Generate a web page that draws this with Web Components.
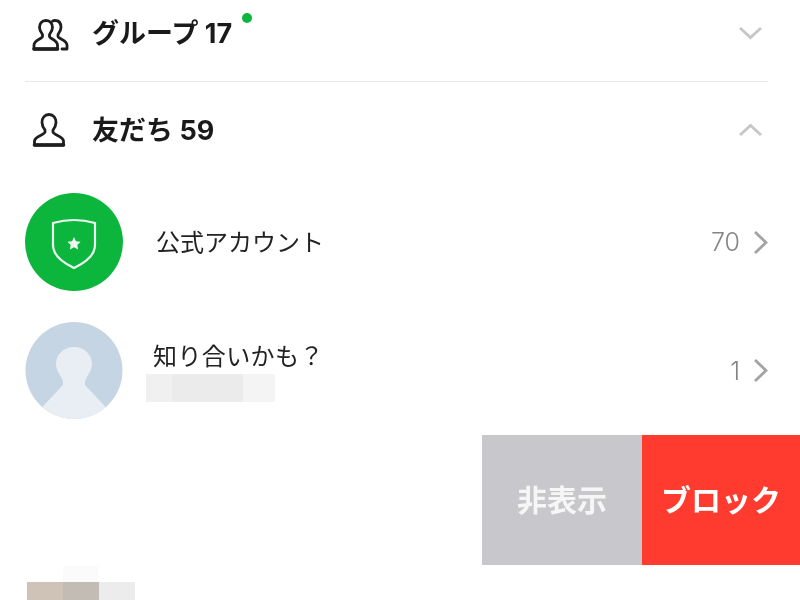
<!DOCTYPE html>
<html lang="ja">
<head>
<meta charset="utf-8">
<title>友だち</title>
<style>
html, body {
    margin: 0;
    padding: 0;
    height: 600px;
    overflow: hidden;
    background: #fff;
}
body {
    font-family: "Noto Sans CJK JP", "Liberation Sans", sans-serif;
    color: #1a1a1a;
    filter: blur(0.4px);
}
</style>
</head>
<body>
<friend-list>
    <section-header height="66" chevron="down" badge>
        <svg slot="icon" style="margin:3px 0 0 1.5px" width="38" height="32" viewBox="0 0 38 32" fill="none" stroke="#1e1e1e" stroke-width="2.8" stroke-linejoin="round" stroke-linecap="round">
            <path d="M14 1.5C9.5 1.5 7.5 5 7.5 8.5C7.5 11.5 9 13.5 10.5 15.5V17.5C10.5 19.5 2 21.5 2 26V30H25.5V26C25.5 21.5 17.5 19.5 17.5 17.5V15.5C19 13.5 20.5 11.5 20.5 8.5C20.5 5 18.5 1.5 14 1.5Z"/>
            <path d="M20.5 2.2C21.2 1.7 22 1.5 23 1.5C27.5 1.5 29 5 29 8.5C29 11.5 27.5 13.5 26 15.5V17.5C26 19.5 35 21.5 35 26V30H30"/>
            <path d="M2 30H25.5" stroke-width="3.6"/>
        </svg>
        グループ 17
    </section-header>
    <hr-line></hr-line>
    <section-header height="96" chevron="up">
        <svg slot="icon" width="38" height="34" viewBox="0 0 38 34" fill="none" stroke="#1e1e1e" stroke-width="2.8" stroke-linejoin="round" stroke-linecap="round">
            <path d="M19 1.5C14.5 1.5 12 5 12 9.5C12 12.5 13.5 15 15 17V19C15 21.5 4.5 23.5 4.5 28V32H33.5V28C33.5 23.5 23 21.5 23 19V17C24.5 15 26 12.5 26 9.5C26 5 23.5 1.5 19 1.5Z"/>
            <path d="M4.5 32H33.5" stroke-width="3.6"/>
        </svg>
        友だち 59
    </section-header>
    <list-row count="70" style="margin-top:15px">
        <svg slot="avatar" width="98" height="98" viewBox="0 0 98 98">
            <circle cx="49" cy="49" r="49" fill="#0cb53c"/>
            <path d="M28 30Q49 24 70 30V52Q70 65 49 75Q28 65 28 52Z" fill="none" stroke="#effaf2" stroke-width="2.2" stroke-linejoin="miter"/>
            <path d="M49 44L51 48.2L55.6 48.8L52.3 52L53.1 56.5L49 54.3L44.9 56.5L45.7 52L42.4 48.8L47 48.2Z" fill="#effaf2"/>
        </svg>
        <span slot="title" style="margin-left:33px;margin-top:-3px">公式アカウント</span>
    </list-row>
    <list-row count="1" style="margin-top:31px">
        <svg slot="avatar" width="98" height="97" viewBox="0 0 98 97">
            <defs><clipPath id="round"><circle cx="49" cy="48.5" r="48.5"/></clipPath></defs>
            <circle cx="49" cy="48.5" r="48.5" fill="#c5d5e3"/>
            <g clip-path="url(#round)" fill="#e8eef3">
                <path d="M49 25C38 25 31 33 31 42C31 50 37 54 38 60V63L6 97H92L60 63V60C61 54 67 50 67 42C67 33 60 25 49 25Z"/>
            </g>
        </svg>
        <span slot="title" style="margin-left:30px;margin-top:-1px;letter-spacing:.4px">知り合いかも？</span>
        <mosaic-bar slot="sub" cells="26:#f0f0f0,71:#ebebeb,32:#f4f4f4" style="margin:2px 0 0 23px;height:28px"></mosaic-bar>
    </list-row>
    <swipe-actions style="margin-top:16px">
        <action-button width="160" color="#c7c7cc" text="#f6f6f7">非表示</action-button>
        <action-button width="158" color="#ff3b30" text="#fff">ブロック</action-button>
    </swipe-actions>
    <mosaic-bar cells="36:#fff,35:#fbfbfb" style="margin:1px 0 0 27px;height:16px"></mosaic-bar>
    <mosaic-bar cells="36:#cfc3b8,36:#c2bcb5,36:#ececec" style="margin-left:27px;height:18px"></mosaic-bar>
</friend-list>

<script>
const chevrons = {
    down: '<path d="M2 2L12.5 11.5L23 2"/>',
    up: '<path d="M2 12L12.5 2.5L23 12"/>'
};

class FriendList extends HTMLElement {
    constructor() {
        super();
        this.attachShadow({ mode: "open" }).innerHTML = `
        <style>
        :host { display: block; width: 800px; }
        </style>
        <slot></slot>`;
    }
}

class SectionHeader extends HTMLElement {
    constructor() {
        super();
        this.attachShadow({ mode: "open" });
    }

    connectedCallback() {
        const height = this.getAttribute("height");
        const dir = this.getAttribute("chevron");
        const bottomGap = height === "66" ? 15 : 0;
        this.shadowRoot.innerHTML = `
        <style>
        :host {
            display: flex;
            align-items: center;
            height: ${height}px;
            margin-bottom: ${bottomGap}px;
            padding: 0 37px 0 30px;
        }
        .icon { width: 62px; display: flex; }
        .title {
            position: relative;
            top: 1px;
            font-family: Inter, "Noto Sans CJK JP", sans-serif;
            font-size: 27px;
            font-weight: 700;
            line-height: 36px;
            color: #1a1a1a;
        }
        .dot {
            position: absolute;
            top: -3px;
            right: -20px;
            width: 10px;
            height: 10px;
            border-radius: 50%;
            background: #0cb53c;
        }
        svg.chev { margin-left: auto; fill: none; stroke: #c6c6c6; stroke-width: 2.8; }
        </style>
        <div class="icon"><slot name="icon"></slot></div>
        <div class="title"><slot></slot>${this.hasAttribute("badge") ? '<i class="dot"></i>' : ""}</div>
        <svg class="chev" width="25" height="14" viewBox="0 0 25 14">${chevrons[dir]}</svg>`;
    }
}

class HrLine extends HTMLElement {
    constructor() {
        super();
        this.attachShadow({ mode: "open" }).innerHTML = `
        <style>
        :host { display: block; height: 1px; margin: 0 32px 0 25px; background: #e8e8e8; }
        </style>`;
    }
}

class ListRow extends HTMLElement {
    constructor() {
        super();
        this.attachShadow({ mode: "open" });
    }

    connectedCallback() {
        this.shadowRoot.innerHTML = `
        <style>
        :host {
            display: flex;
            align-items: center;
            padding: 0 32px 0 25px;
        }
        .avatar { display: flex; flex: none; }
        .text {
            flex: 1;
            display: flex;
            flex-direction: column;
            font-size: 24px;
            line-height: 34px;
            color: #222;
        }
        .count {
            font-family: Inter, "Liberation Sans", sans-serif;
            font-weight: 300;
            font-size: 25px;
            color: #858585;
            margin-right: 13px;
        }
        svg { fill: none; stroke: #a3a3a3; stroke-width: 2.8; }
        </style>
        <div class="avatar"><slot name="avatar"></slot></div>
        <div class="text"><slot name="title"></slot><slot name="sub"></slot></div>
        <span class="count">${this.getAttribute("count")}</span>
        <svg width="15" height="25" viewBox="0 0 15 25"><path d="M2 2L13 12.5L2 23"/></svg>`;
    }
}

class MosaicBar extends HTMLElement {
    constructor() {
        super();
        this.attachShadow({ mode: "open" });
    }

    connectedCallback() {
        const cells = this.getAttribute("cells").split(",").map(c => {
            const [w, color] = c.split(":");
            return `<i style="width:${w}px;background:${color}"></i>`;
        });
        this.shadowRoot.innerHTML = `
        <style>
        :host { display: flex; }
        i { display: block; }
        </style>
        ${cells.join("")}`;
    }
}

class SwipeActions extends HTMLElement {
    constructor() {
        super();
        this.attachShadow({ mode: "open" }).innerHTML = `
        <style>
        :host { display: flex; justify-content: flex-end; height: 130px; }
        </style>
        <slot></slot>`;
    }
}

class ActionButton extends HTMLElement {
    constructor() {
        super();
        this.attachShadow({ mode: "open" });
    }

    connectedCallback() {
        this.shadowRoot.innerHTML = `
        <style>
        :host {
            display: flex;
            align-items: center;
            justify-content: center;
            width: ${this.getAttribute("width")}px;
            background: ${this.getAttribute("color")};
            color: ${this.getAttribute("text")};
            font-size: 30px;
            font-weight: 700;
            padding-bottom: 4px;
            height: 126px;
        }
        </style>
        <slot></slot>`;
    }
}

customElements.define("friend-list", FriendList);
customElements.define("section-header", SectionHeader);
customElements.define("hr-line", HrLine);
customElements.define("list-row", ListRow);
customElements.define("mosaic-bar", MosaicBar);
customElements.define("swipe-actions", SwipeActions);
customElements.define("action-button", ActionButton);
</script>
</body>
</html>
